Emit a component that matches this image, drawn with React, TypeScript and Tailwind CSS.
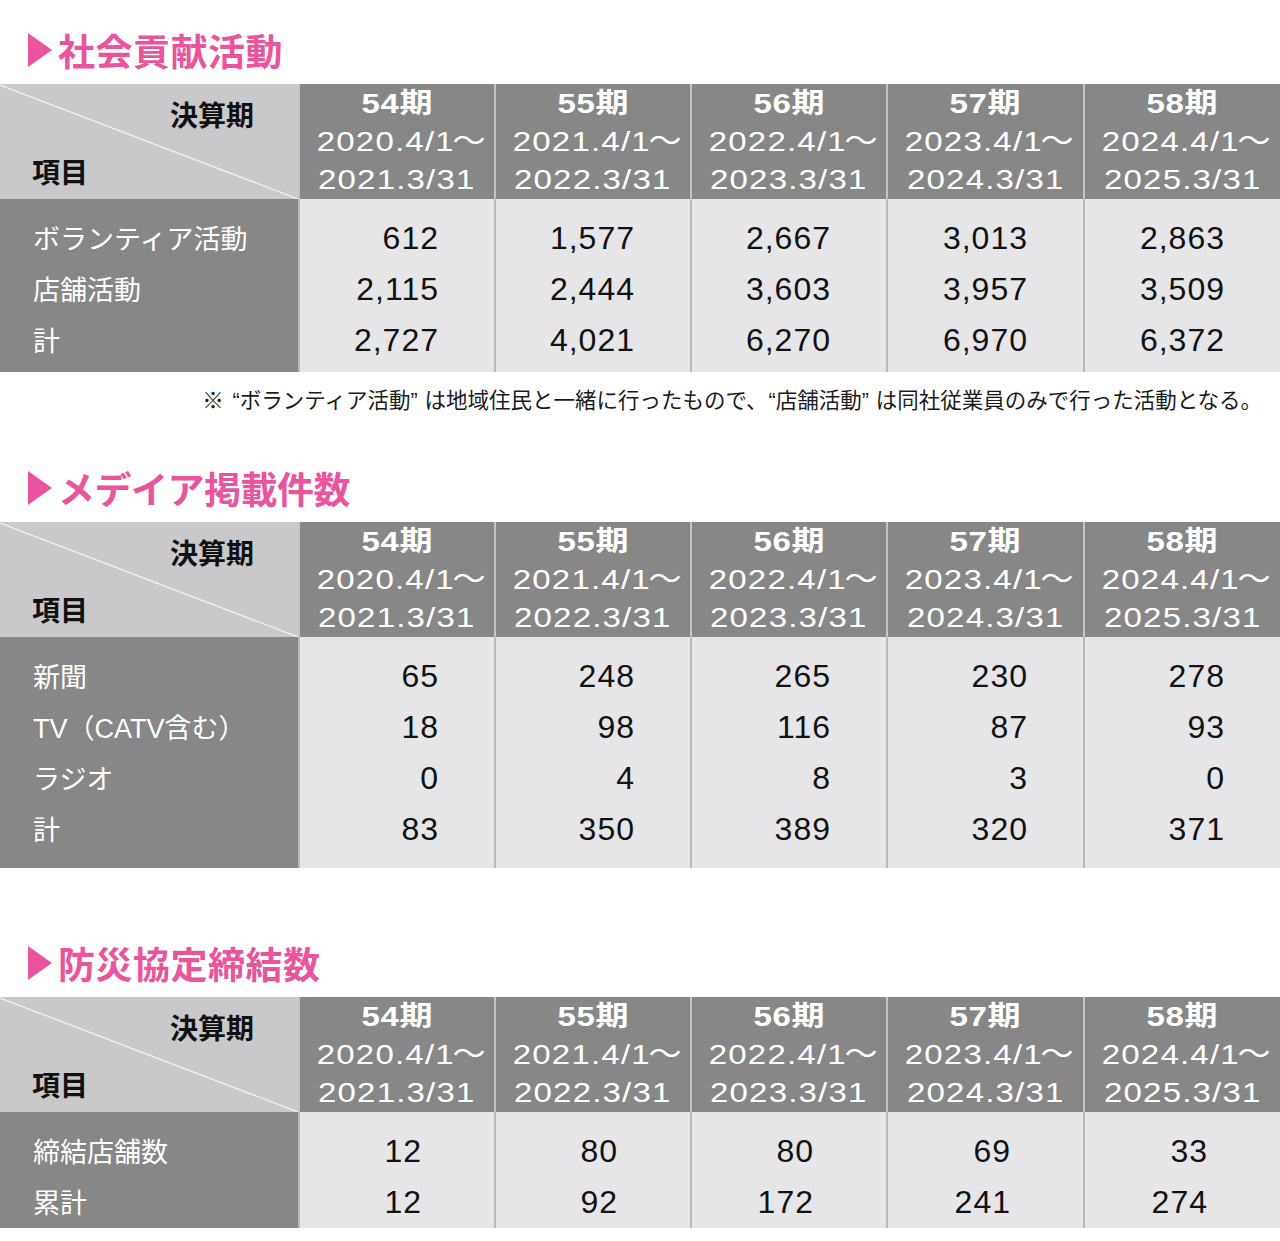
import React from "react";

const periods = [
  { term: "54期", from: "2020.4/1", to: "2021.3/31" },
  { term: "55期", from: "2021.4/1", to: "2022.3/31" },
  { term: "56期", from: "2022.4/1", to: "2023.3/31" },
  { term: "57期", from: "2023.4/1", to: "2024.3/31" },
  { term: "58期", from: "2024.4/1", to: "2025.3/31" },
];

const colWidths = ["w-[196px]", "w-[196px]", "w-[196px]", "w-[197px]", "w-[197px]"];

type Row = { label: string; values: string[] };

const JP = "[font-family:'Noto_Sans_CJK_JP',sans-serif]";
const NUM = "[font-family:'Liberation_Sans','Noto_Sans_CJK_JP',sans-serif]";

function Title({ text, track }: { text: string; track: string }) {
  return (
    <div className={`h-[68px] flex items-center pl-[28px] gap-[6px] ${JP}`}>
      <svg width="24" height="34" viewBox="0 0 24 34" className="shrink-0">
        <polygon points="0,0 24,17 0,34" fill="#e9549c" />
      </svg>
      <span className={`text-[37px] font-bold text-[#e9549c] leading-none ${track}`}>{text}</span>
    </div>
  );
}

function Table({ rows, bodyH, pr }: { rows: Row[]; bodyH: string; pr: string }) {
  return (
    <div className="w-[1280px]">
      {/* header */}
      <div className="flex h-[115px]">
        <div className={`relative w-[298px] shrink-0 bg-[#c9c9cb] ${JP}`}>
          <svg className="absolute inset-0" width="298" height="115" viewBox="0 0 298 115">
            <line x1="0" y1="1" x2="298" y2="115" stroke="#f2f2f2" strokeWidth="1.3" />
          </svg>
          <div className="absolute left-[170px] top-[12px] text-[28px] font-bold text-[#111] leading-[36px]">決算期</div>
          <div className="absolute left-[32px] top-[69px] text-[28px] font-bold text-[#111] leading-[36px]">項目</div>
        </div>
        {periods.map((p, i) => (
          <div
            key={p.term}
            className={`${colWidths[i]} shrink-0 bg-[#878787] border-l-2 border-[#c4c4c4] flex flex-col items-center pt-[1px] text-white ${NUM}`}
          >
            <div className="h-[38px] flex items-center">
              <span className="inline-block scale-x-[1.18] text-[28px] font-bold tracking-[0.5px] leading-none">{p.term}</span>
            </div>
            <div className="h-[38px] flex items-center">
              <span className="inline-block scale-x-[1.18] text-[28px] tracking-[1px] leading-none">
                {p.from}
                <span className="inline-block ml-[-2px] mr-[-7px] tracking-normal">～</span>
              </span>
            </div>
            <div className="h-[38px] flex items-center">
              <span className="inline-block scale-x-[1.18] text-[28px] tracking-[1px] leading-none">{p.to}</span>
            </div>
          </div>
        ))}
      </div>
      {/* body */}
      <div className={`flex ${bodyH}`}>
        <div className={`w-[298px] shrink-0 bg-[#878787] pt-[16px] pl-[33px] ${NUM}`}>
          {rows.map((r) => (
            <div key={r.label} className="h-[51px] flex items-center text-[27px] text-white leading-none">
              {r.label}
            </div>
          ))}
        </div>
        {periods.map((p, i) => (
          <div
            key={p.term}
            className={`${colWidths[i]} shrink-0 bg-[#e6e6e8] border-l-2 border-[#b9b9b9] pt-[13px] ${pr} ${NUM}`}
          >
            {rows.map((r) => (
              <div key={r.label} className="h-[51px] flex items-center justify-end">
                <span className="text-[32px] tracking-[1px] text-[#111] leading-none">{r.values[i]}</span>
              </div>
            ))}
          </div>
        ))}
      </div>
    </div>
  );
}

const t1: Row[] = [
  { label: "ボランティア活動", values: ["612", "1,577", "2,667", "3,013", "2,863"] },
  { label: "店舗活動", values: ["2,115", "2,444", "3,603", "3,957", "3,509"] },
  { label: "計", values: ["2,727", "4,021", "6,270", "6,970", "6,372"] },
];

const t2: Row[] = [
  { label: "新聞", values: ["65", "248", "265", "230", "278"] },
  { label: "TV（CATV含む）", values: ["18", "98", "116", "87", "93"] },
  { label: "ラジオ", values: ["0", "4", "8", "3", "0"] },
  { label: "計", values: ["83", "350", "389", "320", "371"] },
];

const t3: Row[] = [
  { label: "締結店舗数", values: ["12", "80", "80", "69", "33"] },
  { label: "累計", values: ["12", "92", "172", "241", "274"] },
];

const OpenQ = ({ w }: { w: string }) => (
  <span className={`inline-block ${w} text-right [font-family:'Liberation_Sans',sans-serif]`}>“</span>
);
const CloseQ = () => (
  <span className="inline-block w-[14px] text-left [font-family:'Liberation_Sans',sans-serif]">”</span>
);

export default function App() {
  return (
    <div className="w-[1280px] h-[1241px] bg-white overflow-hidden" lang="ja">
      <div className="pt-[16px]">
        <Title text="社会貢献活動" track="tracking-[0.5px]" />
        <Table rows={t1} bodyH="h-[173px]" pr="pr-[55px]" />
        <div className={`h-[56px] flex items-center justify-end pr-[18px] text-[21.5px] text-[#1a1a1a] ${JP}`}>
          <span className="whitespace-nowrap">
            ※<OpenQ w="w-[16px]" />ボランティア活動<CloseQ />は地域住民と一緒に行ったもので、<OpenQ w="w-[8px]" />店舗活動<CloseQ />は同社従業員のみで行った活動となる。
          </span>
        </div>
      </div>
      <div className="mt-[26px]">
        <Title text="メデイア掲載件数" track="tracking-[-0.5px]" />
        <Table rows={t2} bodyH="h-[231px]" pr="pr-[55px]" />
      </div>
      <div className="mt-[61px]">
        <Title text="防災協定締結数" track="tracking-[0.5px]" />
        <Table rows={t3} bodyH="h-[116px]" pr="pr-[72px]" />
      </div>
    </div>
  );
}
